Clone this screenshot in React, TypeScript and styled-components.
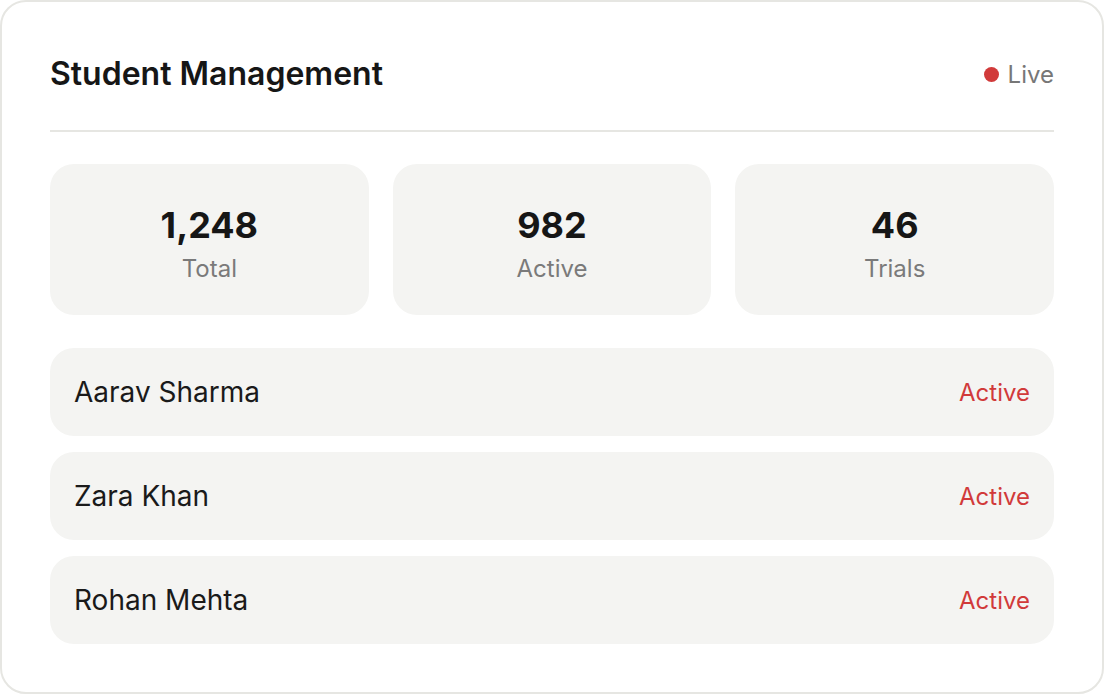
import React from 'react'
import styled, { createGlobalStyle } from 'styled-components'

const GlobalStyle = createGlobalStyle`
  * { box-sizing: border-box; }
  html, body { margin: 0; padding: 0; background: #ffffff; }
  body { font-family: Inter, "Noto Sans", Arial, sans-serif; color: #1a1a1a; }
`

const Card = styled.div`
  width: 1104px;
  height: 694px;
  border: 2px solid #e6e6e2;
  border-radius: 26px;
  background: #ffffff;
  padding: 48px;
  display: flex;
  flex-direction: column;
`

const Header = styled.div`
  display: flex;
  align-items: center;
  justify-content: space-between;
  padding-bottom: 32px;
  border-bottom: 2px solid #e6e6e2;
`

const Title = styled.h1`
  margin: 0;
  font-size: 32px;
  line-height: 48px;
  font-weight: 600;
  color: #161616;
`

const Live = styled.div`
  display: flex;
  align-items: center;
  gap: 9px;
  font-size: 24px;
  color: #777777;
`

const Dot = styled.span`
  width: 15px;
  height: 15px;
  border-radius: 50%;
  background: #d13a3a;
`

const Stats = styled.div`
  display: grid;
  grid-template-columns: repeat(3, 1fr);
  gap: 24px;
  margin-top: 32px;
`

const Stat = styled.div`
  background: #f4f4f2;
  border-radius: 24px;
  height: 151px;
  display: flex;
  flex-direction: column;
  align-items: center;
  padding-top: 41px;
`

const Value = styled.div`
  font-size: 36px;
  line-height: 40px;
  font-weight: 700;
  color: #161616;
`

const Label = styled.div`
  margin-top: 11px;
  font-size: 24px;
  line-height: 26px;
  color: #7a7a7a;
`

const List = styled.div`
  display: flex;
  flex-direction: column;
  gap: 16px;
  margin-top: 33px;
`

const Row = styled.div`
  height: 88px;
  border-radius: 24px;
  background: #f4f4f2;
  display: flex;
  align-items: center;
  justify-content: space-between;
  padding: 0 24px;
`

const Name = styled.span`
  font-size: 28px;
  color: #1a1a1a;
`

const Status = styled.span<{ $tone: 'active' | 'inactive' }>`
  font-size: 24px;
  color: ${p => (p.$tone === 'active' ? '#d13a3a' : '#777777')};
`

const stats = [
  { value: '1,248', label: 'Total' },
  { value: '982', label: 'Active' },
  { value: '46', label: 'Trials' },
]

const students = ['Aarav Sharma', 'Zara Khan', 'Rohan Mehta']

export default function App() {
  return (
    <>
      <GlobalStyle />
      <Card>
        <Header>
          <Title>Student Management</Title>
          <Live>
            <Dot />
            Live
          </Live>
        </Header>
        <Stats>
          {stats.map(s => (
            <Stat key={s.label}>
              <Value>{s.value}</Value>
              <Label>{s.label}</Label>
            </Stat>
          ))}
        </Stats>
        <List>
          {students.map(name => (
            <Row key={name}>
              <Name>{name}</Name>
              <Status $tone="active">Active</Status>
            </Row>
          ))}
        </List>
      </Card>
    </>
  )
}
